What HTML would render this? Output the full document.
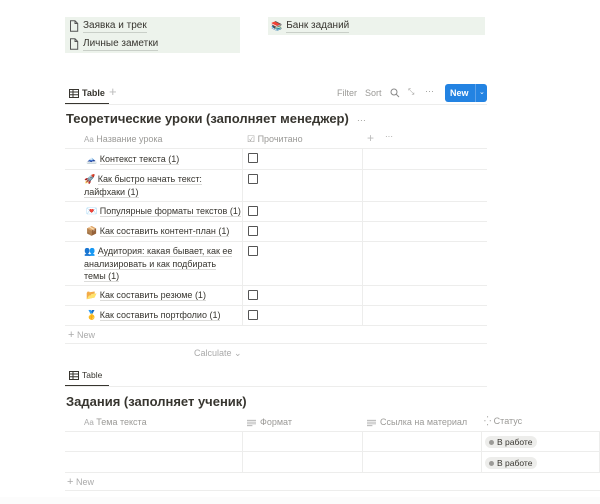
<!DOCTYPE html>
<html><head><meta charset="utf-8"><style>
*{margin:0;padding:0;box-sizing:border-box}
body{width:600px;height:504px;background:#fff;font-family:"Liberation Sans","Noto Sans CJK SC",sans-serif;color:#37352f;position:relative;overflow:hidden;font-size:9px}
.a{position:absolute;white-space:nowrap}
.lk{background:#edf3ec;height:18px;display:flex;align-items:center;padding-left:4px;font-size:10px}
.lk span.t{border-bottom:1px solid #c9cfc8;line-height:12px;margin-left:4px}
.hl{position:absolute;height:1px;background:#ededec}
.vl{position:absolute;width:1px;background:#ededec}
.cell{position:absolute;font-size:9px;line-height:12.5px;color:#37352f;white-space:nowrap}
.cell u{text-decoration:none;border-bottom:1px solid #dcdcda}
.cb{position:absolute;width:10px;height:10px;border:1.3px solid #555;border-radius:1px;left:248px}
.gr{color:#9b9a97}
.pill{position:absolute;background:#ededeb;border-radius:8px;height:12px;font-size:8.5px;line-height:12px;padding:0 5px 0 4px;color:#37352f}
.pill:before{content:"";display:inline-block;width:5px;height:5px;border-radius:50%;background:#9b9a97;margin-right:3px;vertical-align:0}
</style></head><body>
<svg width="0" height="0" style="position:absolute"><defs>
<symbol id="doc" viewBox="0 0 10 12"><path d="M1.5 .8h4.5l2.7 2.7v7.7h-7.2z M6 .8v2.7h2.7" fill="none" stroke="#555" stroke-width="1"/></symbol>
<symbol id="tbl" viewBox="0 0 10 9"><rect x=".5" y=".5" width="9" height="8" fill="none" stroke="#37352f"/><path d="M.5 3h9M.5 5.7h9M4 .5v8" stroke="#37352f"/></symbol>
<symbol id="ln" viewBox="0 0 10 8"><path d="M0 1h10M0 3h10M0 5h10M0 7h6" stroke="#aaa" stroke-width=".9"/></symbol>
</defs></svg>

<div class="a lk" style="left:65px;top:17px;width:175px"><svg width="10" height="12"><use href="#doc"/></svg><span class="t">Заявка и трек</span></div>
<div class="a lk" style="left:65px;top:35px;width:175px"><svg width="10" height="12"><use href="#doc"/></svg><span class="t">Личные заметки</span></div>
<div class="a lk" style="left:268px;top:17px;width:217px;padding-left:3px"><span style="font-size:9px">📚</span><span class="t">Банк заданий</span></div>

<!-- tab 1 -->
<svg class="a" style="left:69px;top:89px" width="10" height="9"><use href="#tbl"/></svg>
<div class="a" style="left:82px;top:88px;font-size:9px;font-weight:bold">Table</div>
<div class="a gr" style="left:109px;top:84px;font-size:13px;color:#bbb">+</div>
<div class="a" style="left:65px;top:103px;width:44px;height:1.5px;background:#37352f"></div>
<div class="hl" style="left:65px;top:104px;width:422px"></div>
<div class="a gr" style="left:337px;top:88px;font-size:9px">Filter</div>
<div class="a gr" style="left:365px;top:88px;font-size:9px">Sort</div>
<svg class="a" style="left:390px;top:88px" width="10" height="10"><circle cx="4" cy="4" r="3" fill="none" stroke="#888" stroke-width="1"/><path d="M6.3 6.3L9 9" stroke="#888"/></svg>
<div class="a gr" style="left:408px;top:87px;font-size:8px">⤡</div>
<div class="a gr" style="left:425px;top:86px;font-size:9px">···</div>
<div class="a" style="left:445px;top:84px;width:42px;height:18px;background:#2383e2;border-radius:3px;color:#fff;font-weight:bold;font-size:9px;line-height:18px;padding-left:5px">New<span style="position:absolute;left:30px;top:0;width:1px;height:18px;background:#5ea2ea"></span><span style="position:absolute;left:34px;font-size:7px;font-weight:normal">⌄</span></div>

<div class="a" style="left:66px;top:111px;font-size:13px;font-weight:bold">Теоретические уроки (заполняет менеджер)<span class="gr" style="font-size:9px;font-weight:normal;margin-left:8px">···</span></div>

<div class="a gr" style="left:84px;top:134px;font-size:9px"><span style="font-size:8px;color:#aaa">Aa</span> Название урока</div>
<div class="a gr" style="left:247px;top:134px;font-size:9px">☑ Прочитано</div>
<div class="a gr" style="left:367px;top:131px;font-size:12px;color:#bbb">+</div>
<div class="a gr" style="left:385px;top:132px;font-size:8px">···</div>
<div class="hl" style="left:65px;top:148px;width:422px"></div>
<div class="vl" style="left:242px;top:148px;height:177px"></div>
<div class="vl" style="left:362px;top:148px;height:177px"></div>
<div class="hl" style="left:65px;top:169px;width:422px"></div>
<div class="hl" style="left:65px;top:201px;width:422px"></div>
<div class="hl" style="left:65px;top:221px;width:422px"></div>
<div class="hl" style="left:65px;top:241px;width:422px"></div>
<div class="hl" style="left:65px;top:285px;width:422px"></div>
<div class="hl" style="left:65px;top:305px;width:422px"></div>
<div class="hl" style="left:65px;top:325px;width:422px"></div>
<div class="hl" style="left:65px;top:343px;width:422px"></div>

<div class="cell" style="left:86px;top:153px">🗻 <u>Контекст текста (1)</u></div>
<div class="cell" style="left:84px;top:173px">🚀 <u>Как быстро начать текст:</u><br><u>лайфхаки (1)</u></div>
<div class="cell" style="left:86px;top:205px">💌 <u>Популярные форматы текстов (1)</u></div>
<div class="cell" style="left:86px;top:225px">📦 <u>Как составить контент-план (1)</u></div>
<div class="cell" style="left:84px;top:245px">👥 <u>Аудитория: какая бывает, как ее</u><br><u>анализировать и как подбирать</u><br><u>темы (1)</u></div>
<div class="cell" style="left:86px;top:289px">📂 <u>Как составить резюме (1)</u></div>
<div class="cell" style="left:86px;top:309px">🥇 <u>Как составить портфолио (1)</u></div>
<div class="cb" style="top:153px"></div>
<div class="cb" style="top:174px"></div>
<div class="cb" style="top:206px"></div>
<div class="cb" style="top:226px"></div>
<div class="cb" style="top:246px"></div>
<div class="cb" style="top:290px"></div>
<div class="cb" style="top:310px"></div>
<div class="a" style="left:68px;top:329px;font-size:9px;color:#aaa"><span style="font-size:11px">+</span> New</div>
<div class="a" style="left:194px;top:348px;font-size:9px;color:#aaa">Calculate ⌄</div>

<!-- tab 2 -->
<svg class="a" style="left:69px;top:371px" width="10" height="9"><use href="#tbl"/></svg>
<div class="a" style="left:82px;top:370px;font-size:8.5px">Table</div>
<div class="a" style="left:65px;top:385px;width:44px;height:1.5px;background:#37352f"></div>
<div class="hl" style="left:65px;top:386px;width:422px"></div>
<div class="a" style="left:66px;top:394px;font-size:13px;font-weight:bold">Задания (заполняет ученик)</div>

<div class="a gr" style="left:84px;top:417px;font-size:9px"><span style="font-size:8px;color:#aaa">Aa</span> Тема текста</div>
<svg class="a" style="left:247px;top:419px" width="9" height="8"><use href="#ln"/></svg>
<div class="a gr" style="left:260px;top:417px;font-size:9px">Формат</div>
<svg class="a" style="left:367px;top:419px" width="9" height="8"><use href="#ln"/></svg>
<div class="a gr" style="left:380px;top:417px;font-size:9px">Ссылка на материал</div>
<div class="a gr" style="left:484px;top:416px;font-size:9px">⁛ Статус</div>
<div class="hl" style="left:65px;top:431px;width:535px"></div>
<div class="hl" style="left:65px;top:451px;width:535px"></div>
<div class="hl" style="left:65px;top:472px;width:535px"></div>
<div class="hl" style="left:65px;top:490px;width:535px"></div>
<div class="vl" style="left:242px;top:431px;height:41px"></div>
<div class="vl" style="left:362px;top:431px;height:41px"></div>
<div class="vl" style="left:481px;top:431px;height:41px"></div>
<div class="vl" style="left:599px;top:431px;height:41px"></div>
<div class="pill" style="left:485px;top:436px">В работе</div>
<div class="pill" style="left:485px;top:457px">В работе</div>
<div class="a" style="left:67px;top:476px;font-size:9px;color:#aaa"><span style="font-size:11px">+</span> New</div>
<div class="a" style="left:0;top:497px;width:600px;height:7px;background:#fcfcfc"></div>
</body></html>
